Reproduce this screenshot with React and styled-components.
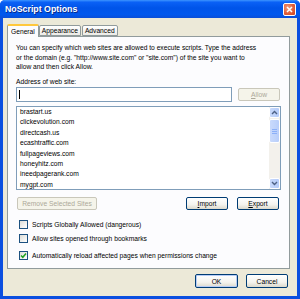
import React from 'react';
import styled, { createGlobalStyle } from 'styled-components';

const Global = createGlobalStyle`
  html, body { margin: 0; padding: 0; background: #fff; }
  body { font-family: "Liberation Sans", Arial, sans-serif; font-size: 6.7px; color: #000; }
  * { box-sizing: border-box; }
`;

const Window = styled.div`
  width: 300px;
  height: 299px;
  display: flex;
  flex-direction: column;
  background: #0B4FE0;
  border-radius: 5px 5px 0 0;
  overflow: hidden;
`;

const TitleBar = styled.div`
  height: 18px;
  flex: none;
  display: flex;
  align-items: center;
  justify-content: space-between;
  padding: 0 4px 0 5px;
  background: linear-gradient(to bottom, #3D95FF 0%, #0A61F6 12%, #0054E9 45%, #0058EE 80%, #0A4FD8 100%);
`;

const Title = styled.span`
  color: #fff;
  font-weight: bold;
  font-size: 8.8px;
  text-shadow: 1px 1px 0 #0A2A8A;
`;

const CloseButton = styled.div`
  width: 13px;
  height: 13px;
  border: 1px solid #fff;
  border-radius: 2px;
  background: radial-gradient(circle at 35% 35%, #F19C7F 0%, #E2603B 55%, #C9431F 100%);
  display: flex;
  align-items: center;
  justify-content: center;
  margin-top: 1px;
`;

const Body = styled.div`
  flex: 1;
  margin: 0 3px 3px 3px;
  background: #ECE9D8;
  display: flex;
  flex-direction: column;
  padding: 6px 6px 0 4px;
`;

const Tabs = styled.div`
  display: flex;
  align-items: flex-end;
  height: 12px;
  position: relative;
  z-index: 1;
`;

const Tab = styled.div`
  height: ${p => (p.$active ? '13px' : '11px')};
  margin-bottom: ${p => (p.$active ? '-1px' : '0')};
  padding: 0 ${p => (p.$active ? '3px' : '2px')};
  margin-left: ${p => p.$ml || 0}px;
  display: flex;
  align-items: center;
  border: 1px solid #919B9C;
  border-bottom: ${p => (p.$active ? 'none' : '1px solid #919B9C')};
  border-top: ${p => (p.$active ? '2px solid #FFC83C' : '1px solid #919B9C')};
  border-radius: 2px 2px 0 0;
  background: ${p => (p.$active ? '#FCFCFE' : 'linear-gradient(to bottom, #FFFFFF, #ECEBE6)')};
  white-space: nowrap;
`;

const Panel = styled.div`
  width: 283px;
  height: 233px;
  border: 1px solid #919B9C;
  background: #FCFCFE;
  padding: 6px 8px 0 8px;
  display: flex;
  flex-direction: column;
`;

const Para = styled.p`
  margin: 0;
  line-height: 9.5px;
  white-space: nowrap;
`;

const Label = styled.div`
  margin-top: 5px;
  line-height: 9.5px;
`;

const Row = styled.div`
  display: flex;
  align-items: center;
  justify-content: ${p => p.$justify || 'flex-start'};
  gap: ${p => p.$gap || 0}px;
  margin-top: ${p => p.$mt || 0}px;
  width: ${p => (p.$w ? `${p.$w}px` : 'auto')};
`;

const Input = styled.div`
  width: 216px;
  height: 15px;
  border: 1px solid #7F9DB9;
  background: #fff;
  display: flex;
  align-items: center;
  padding-left: 2px;
`;

const Caret = styled.span`
  width: 1px;
  height: 9px;
  background: #000;
`;

const Button = styled.div`
  width: ${p => p.$w || 42}px;
  height: ${p => p.$h || 13}px;
  margin-left: ${p => p.$ml || 0}px;
  border: 1px solid ${p => (p.$disabled ? '#C9C7BA' : '#003C74')};
  border-radius: 2px;
  background: ${p => (p.$disabled ? '#F5F4EA' : 'linear-gradient(to bottom, #FFFFFF 0%, #F4F3EE 60%, #DCD9CC 100%)')};
  color: ${p => (p.$disabled ? '#ACA899' : '#000')};
  display: flex;
  align-items: center;
  justify-content: center;
  white-space: nowrap;
  box-shadow: ${p => (p.$default ? 'inset 0 0 0 1px #B6CCF6' : 'none')};
`;

const U = styled.span`
  text-decoration: underline;
`;

const List = styled.div`
  margin-top: 4px;
  width: 265px;
  height: 84px;
  border: 1px solid #7F9DB9;
  background: #fff;
  display: flex;
  overflow: hidden;
`;

const Items = styled.div`
  flex: 1;
  padding-left: 3px;
  display: flex;
  flex-direction: column;
`;

const Item = styled.div`
  height: 10.4px;
  line-height: 10.4px;
  flex: none;
  white-space: nowrap;
`;

const ScrollBar = styled.div`
  width: 11px;
  display: flex;
  flex-direction: column;
  background: #F3F1EC;
`;

const ScrollBtn = styled.div`
  height: 11px;
  border: 1px solid #FFFFFF;
  border-radius: 2px;
  background: linear-gradient(to right, #C8D9FB, #B4CBF9);
  display: flex;
  align-items: center;
  justify-content: center;
  flex: none;
`;

const Thumb = styled.div`
  height: 24px;
  margin-top: 1px;
  border: 1px solid #FFFFFF;
  border-radius: 2px;
  background: linear-gradient(to right, #C9DAFC, #B8CEFA);
  display: flex;
  flex-direction: column;
  align-items: center;
  justify-content: center;
  gap: 1px;
  flex: none;
`;

const Grip = styled.div`
  width: 5px;
  height: 1px;
  background: #8CB0F8;
`;

const Track = styled.div`
  flex: 1;
`;

const CheckRow = styled.div`
  display: flex;
  align-items: center;
  gap: 4px;
  margin-top: ${p => p.$mt}px;
  margin-left: 3px;
  height: 10px;
`;

const Box = styled.div`
  width: 9px;
  height: 9px;
  border: 1px solid #1C5180;
  background: linear-gradient(135deg, #DCDCD7 0%, #FFFFFF 100%);
  display: flex;
  align-items: center;
  justify-content: center;
  flex: none;
`;

const Footer = styled.div`
  display: flex;
  justify-content: flex-end;
  gap: 8px;
  margin-top: 5px;
  padding-right: 3px;
`;

const Arrow = ({ up }) => (
  <svg width="7" height="5" viewBox="0 0 7 5">
    <path d={up ? 'M1 4 L3.5 1.5 L6 4' : 'M1 1 L3.5 3.5 L6 1'} fill="none" stroke="#4D6185" strokeWidth="1.4" />
  </svg>
);

const sites = [
  'brastart.us',
  'clickevolution.com',
  'directcash.us',
  'ecashtraffic.com',
  'fullpageviews.com',
  'honeyhitz.com',
  'ineedpagerank.com',
  'mygpt.com',
];

export default function App() {
  return (
    <>
      <Global />
      <Window>
        <TitleBar>
          <Title>NoScript Options</Title>
          <CloseButton>
            <svg width="7" height="7" viewBox="0 0 7 7">
              <path d="M1 1 L6 6 M6 1 L1 6" stroke="#fff" strokeWidth="1.5" />
            </svg>
          </CloseButton>
        </TitleBar>
        <Body>
          <Tabs>
            <Tab $active>General</Tab>
            <Tab>Appearance</Tab>
            <Tab $ml={1}>Advanced</Tab>
          </Tabs>
          <Panel>
            <Para>
              You can specify which web sites are allowed to execute scripts. Type the address
              <br />
              or the domain (e.g. "http://www.site.com" or "site.com") of the site you want to
              <br />
              allow and then click Allow.
            </Para>
            <Label>Address of web site:</Label>
            <Row $gap={6} $mt={1}>
              <Input>
                <Caret />
              </Input>
              <Button $disabled>
                <U>A</U>llow
              </Button>
            </Row>
            <List>
              <Items>
                {sites.map(s => (
                  <Item key={s}>{s}</Item>
                ))}
              </Items>
              <ScrollBar>
                <ScrollBtn>
                  <Arrow up />
                </ScrollBtn>
                <Thumb>
                  <Grip />
                  <Grip />
                  <Grip />
                </Thumb>
                <Track />
                <ScrollBtn>
                  <Arrow />
                </ScrollBtn>
              </ScrollBar>
            </List>
            <Row $mt={7} $justify="space-between" $w={263}>
              <Button $disabled $w={80} $ml={1}>
                Remove Selected Sites
              </Button>
              <Row $gap={9}>
                <Button>
                  <U>I</U>mport
                </Button>
                <Button>
                  <U>E</U>xport
                </Button>
              </Row>
            </Row>
            <CheckRow $mt={9}>
              <Box />
              Scripts Globally Allowed (dangerous)
            </CheckRow>
            <CheckRow $mt={4}>
              <Box />
              Allow sites opened through bookmarks
            </CheckRow>
            <CheckRow $mt={7}>
              <Box>
                <svg width="7" height="7" viewBox="0 0 7 7">
                  <path d="M1 3.5 L2.8 5.3 L6 1.5" fill="none" stroke="#21A121" strokeWidth="1.5" />
                </svg>
              </Box>
              Automatically reload affected pages when permissions change
            </CheckRow>
          </Panel>
          <Footer>
            <Button $w={43} $h={14} $default>
              OK
            </Button>
            <Button $w={42} $h={14}>
              Cancel
            </Button>
          </Footer>
        </Body>
      </Window>
    </>
  );
}
